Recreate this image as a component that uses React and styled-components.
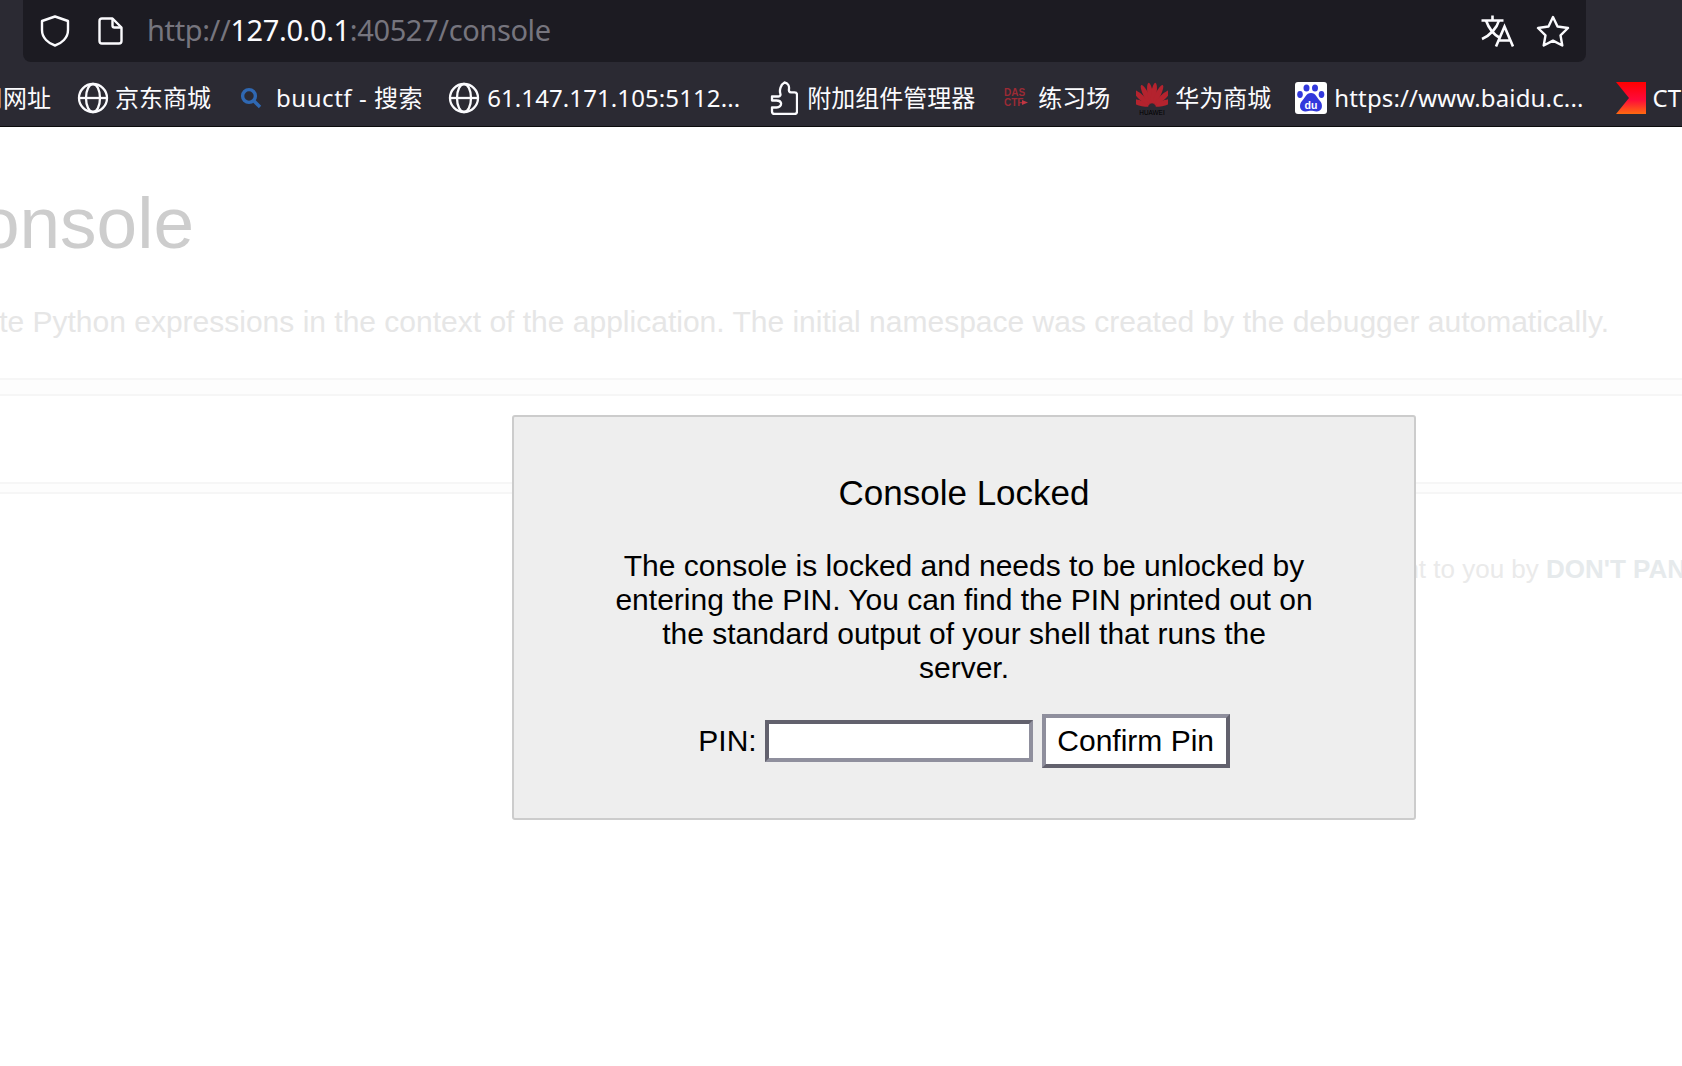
import React from "react";
import styled, { createGlobalStyle } from "styled-components";

const GlobalStyle = createGlobalStyle`
  html, body {
    margin: 0;
    padding: 0;
    width: 100%;
    height: 100%;
    overflow: hidden;
    background: #fff;
  }
  * {
    box-sizing: border-box;
  }
`;

const Browser = styled.div`
  width: 1682px;
  height: 1066px;
  display: flex;
  flex-direction: column;
  overflow: hidden;
`;

const Chrome = styled.header`
  background: #2b2a33;
  font-family: "Noto Sans", "Noto Sans CJK SC", sans-serif;
  color: #fbfbfe;
  border-bottom: 1px solid #0c0c0d;
`;

const UrlRow = styled.div`
  padding-left: 23px;
  padding-right: 96px;
`;

const UrlBar = styled.div`
  height: 62px;
  background: #1c1b22;
  border-radius: 0 0 8px 8px;
  display: flex;
  align-items: center;
  padding: 0 16px 0 17px;
`;

const UrlText = styled.div`
  margin-left: 24px;
  padding-bottom: 3px;
  font-size: 29px;
  letter-spacing: -0.38px;
  color: #76757e;
  flex: 1;
  white-space: nowrap;
`;

const Host = styled.span`
  color: #fbfbfe;
`;

const BarIcon = styled.svg`
  display: block;
  flex: none;
  margin-left: ${(p) => p.$gap || 0}px;
`;

const TranslateIcon = styled(BarIcon)`
  margin-right: 22px;
`;

const BookmarkRow = styled.nav`
  height: 64px;
  padding-top: 8px;
  display: flex;
  align-items: center;
  overflow: hidden;
  white-space: nowrap;
  font-size: 24px;
`;

const Bookmark = styled.div`
  display: flex;
  align-items: center;
  flex: none;
  gap: ${(p) => p.$inner}px;
  margin-left: ${(p) => p.$gap}px;
`;

const Label = styled.span`
  line-height: 32px;
  letter-spacing: ${(p) => p.$spacing || 0}px;
`;

const Page = styled.main`
  position: relative;
  flex: 1;
  background: #fff;
  font-family: "Liberation Sans", Arial, sans-serif;
`;

const ClippedLine = styled.div`
  display: flex;
  justify-content: flex-end;
  overflow: hidden;
  white-space: nowrap;
`;

const Heading = styled(ClippedLine)`
  font-size: 73px;
  line-height: 84px;
  color: #cdcdcd;
  padding-right: 1488px;
  margin-top: 54px;
`;

const Intro = styled(ClippedLine)`
  font-size: 30px;
  line-height: 36px;
  color: #e6e6e6;
  padding-right: 73px;
  margin-top: 39px;
`;

const Rule = styled.div`
  height: ${(p) => p.$height}px;
  margin-top: ${(p) => p.$top}px;
  background: ${(p) => p.$fill};
  border-top: 2px solid #f6f6f6;
  border-bottom: 2px solid #f6f6f6;
`;

const FootNote = styled.div`
  margin-top: 60px;
  margin-left: 1335px;
  font-size: 26px;
  line-height: 30px;
  color: #eaeaea;
  white-space: nowrap;
`;

const FootBold = styled.b`
  color: #e6eaec;
`;

const Prompt = styled.section`
  position: absolute;
  left: 512px;
  top: 288px;
  width: 904px;
  height: 405px;
  padding: 56px 100px 0;
  background: #eee;
  border: 2px solid #ccc;
  border-radius: 3px;
  color: #000;
  text-align: center;
`;

const PromptTitle = styled.div`
  font-size: 35px;
  line-height: 40px;
`;

const PromptText = styled.p`
  margin: 36px 0 0;
  font-size: 30px;
  line-height: 34px;
`;

const PinForm = styled.form`
  display: flex;
  justify-content: center;
  align-items: center;
  margin-top: 29px;
`;

const PinLabel = styled.label`
  font-size: 30px;
  margin-right: 8px;
`;

const PinInput = styled.input`
  width: 268px;
  height: 42px;
  background: #fff;
  border: 4px solid;
  border-color: #62616d #8f8f9d #8f8f9d #62616d;
  margin: 0 9px 0 0;
  padding: 0;
  outline: none;
`;

const PinButton = styled.button`
  width: 188px;
  height: 54px;
  background: #fff;
  border: 4px solid;
  border-color: #8f8f9d #62616d #62616d #8f8f9d;
  font-family: inherit;
  font-size: 30px;
  color: #000;
  padding: 0;
  margin: 0;
`;

const Globe = () => (
  <BarIcon width="32" height="32" viewBox="0 0 32 32" fill="none" stroke="#fbfbfe" strokeWidth="2.3">
    <circle cx="16" cy="16" r="14" />
    <ellipse cx="16" cy="16" rx="7" ry="14" />
    <path d="M2 16h28" />
  </BarIcon>
);

const SearchMark = () => (
  <BarIcon width="22" height="22" viewBox="0 0 22 22" fill="none" stroke="#2f68b3" strokeWidth="3.4">
    <circle cx="9" cy="9" r="6.4" />
    <path d="M13.5 13.5L20 20" />
  </BarIcon>
);

const Puzzle = () => (
  <BarIcon width="28" height="34" viewBox="0 0 28 34" fill="none" stroke="#fbfbfe" strokeWidth="2.3" strokeLinejoin="round">
    <path d="M2 15.5H8.5C10.3 15.5 10.8 14 10.3 12.5C9.3 9.5 10.5 3.5 14.5 1.5C18 2 19.4 5 19 8C18.7 10 19.2 11.3 21 11.3H24.5C26 11.3 27 12.3 27 13.8V30.5C27 32 26 33 24.5 33H4.5C3 33 2 32 2 30.5V26.5H6.5C9.5 26.5 11.5 24.5 11 22C10.5 20 8.5 19.5 6.5 19.5H2V15.5Z" />
  </BarIcon>
);

const DasMark = () => (
  <BarIcon width="24" height="32" viewBox="0 0 24 32" fill="#9c2a35" fontFamily="Liberation Sans, sans-serif" fontSize="10" fontWeight="700">
    <text x="0" y="14">DAS</text>
    <text x="0" y="24">CTF</text>
    <path d="M18 18l6 2.500-6 2.500z" fill="#c23642" />
  </BarIcon>
);

const petals = [-72, -48, -26, -8, 8, 26, 48, 72];

const HuaweiMark = () => (
  <BarIcon width="32" height="34" viewBox="0 0 32 34" fontFamily="Liberation Sans, sans-serif">
    {petals.map((a) => (
      <ellipse key={a} cx="16" cy="12" rx="2.700" ry="10.500" fill="#b4232e" transform={`rotate(${a} 16 26)`} />
    ))}
    <text x="16" y="33.500" fontSize="6.4" fill="#000" textAnchor="middle">HUAWEI</text>
  </BarIcon>
);

const BaiduMark = () => (
  <BarIcon width="32" height="32" viewBox="0 0 32 32">
    <rect width="32" height="32" rx="3" fill="#fff" />
    <g fill="#3238dc">
      <ellipse cx="11.500" cy="6" rx="3" ry="3.600" />
      <ellipse cx="20" cy="6" rx="3" ry="3.600" />
      <ellipse cx="5" cy="12.500" rx="2.800" ry="3.400" />
      <ellipse cx="26.500" cy="12.500" rx="2.800" ry="3.400" />
      <path d="M16 11C11 11 10 16 7 19C4 22 4 29 10 29.500C12.500 29.700 14 28.800 16 28.800C18 28.800 19.500 29.700 22 29.500C28 29 28 22 25 19C22 16 21 11 16 11Z" />
    </g>
    <text x="16" y="27" fill="#fff" fontSize="10.500" fontWeight="700" textAnchor="middle" fontFamily="Liberation Sans, sans-serif">du</text>
  </BarIcon>
);

const CtfMark = () => (
  <BarIcon width="31" height="32" viewBox="0 0 31 32">
    <defs>
      <linearGradient id="ctf" x1="0" y1="0" x2="0" y2="1">
        <stop offset="0" stopColor="#ff0000" />
        <stop offset="0.55" stopColor="#ff0a3a" />
        <stop offset="1" stopColor="#ff6a10" />
      </linearGradient>
    </defs>
    <path d="M1 0H31V32H1L14 16Z" fill="url(#ctf)" />
  </BarIcon>
);

const bookmarks = [
  { icon: <Globe />, text: "京东商城", gap: 26, inner: 6 },
  { icon: <SearchMark />, text: "buuctf - 搜索", gap: 29, inner: 14, spacing: 0.55 },
  { icon: <Globe />, text: "61.147.171.105:5112...", gap: 25, inner: 7, spacing: 0.1 },
  { icon: <Puzzle />, text: "附加组件管理器", gap: 30, inner: 9 },
  { icon: <DasMark />, text: "练习场", gap: 29, inner: 10 },
  { icon: <HuaweiMark />, text: "华为商城", gap: 26, inner: 7 },
  { icon: <BaiduMark />, text: "https://www.baidu.c...", gap: 24, inner: 7, spacing: 0.15 },
  { icon: <CtfMark />, text: "CTF", gap: 31, inner: 7 },
];

const App = () => {
  return (
    <Browser>
      <GlobalStyle />
      <Chrome>
        <UrlRow>
          <UrlBar>
            <BarIcon width="30" height="32" viewBox="0 0 30 32" fill="none" stroke="#fbfbfe" strokeWidth="2.4" strokeLinejoin="round">
              <path d="M15 1.500L28 6V15C28 23 21.500 28.500 15 30.500C8.500 28.500 2 23 2 15V6L15 1.500Z" />
            </BarIcon>
            <BarIcon $gap={28} width="25" height="28" viewBox="0 0 25 28" fill="none" stroke="#fbfbfe" strokeWidth="2.4" strokeLinejoin="round">
              <path d="M4 1.500H14.500L23.500 10.500V24C23.500 25.500 22.500 26.500 21 26.500H4C2.500 26.500 1.500 25.500 1.500 24V4C1.500 2.500 2.500 1.500 4 1.500Z" />
              <path d="M14.500 1.500V8.500C14.500 9.800 15.200 10.500 16.500 10.500H23.500" />
            </BarIcon>
            <UrlText>
              http://<Host>127.0.0.1</Host>:40527/console
            </UrlText>
            <TranslateIcon width="34" height="32" viewBox="0 0 34 32" fill="none" stroke="#fbfbfe" strokeWidth="2.6">
              <path d="M12.500 0.500V5M1.500 5.500H23.500" />
              <path d="M6 5.500C9 14 14.500 20 20 23M19 5.500C17 13 10 20.500 2 24" />
              <path d="M16 31.500L24.500 11.500L33 31.500M19 25.500H30" />
            </TranslateIcon>
            <BarIcon width="34" height="32" viewBox="0 0 34 32" fill="none" stroke="#fbfbfe" strokeWidth="2.4" strokeLinejoin="round">
              <path d="M17 2L21.500 11.500L32 13L24.500 20.300L26.300 30.500L17 25.600L7.700 30.500L9.500 20.300L2 13L12.500 11.500L17 2Z" />
            </BarIcon>
          </UrlBar>
        </UrlRow>
        <BookmarkRow>
          <Bookmark $gap={-45} $inner={0}>
            <Label>常用网址</Label>
          </Bookmark>
          {bookmarks.map((b) => (
            <Bookmark key={b.text} $gap={b.gap} $inner={b.inner}>
              {b.icon}
              <Label $spacing={b.spacing}>{b.text}</Label>
            </Bookmark>
          ))}
        </BookmarkRow>
      </Chrome>
      <Page>
        <Heading>
          <span>Interactive Console</span>
        </Heading>
        <Intro>
          <span>
            In this console you can execute Python expressions in the context of the application. The initial namespace was created by the debugger automatically.
          </span>
        </Intro>
        <Rule $top={38} $height={18} $fill="#fdfdfd" />
        <Rule $top={86} $height={12} $fill="#fdfdfd" />
        <FootNote>
          Brought to you by <FootBold>DON'T PANIC</FootBold>, your friendly Werkzeug powered traceback interpreter.
        </FootNote>
        <Prompt>
          <PromptTitle>Console Locked</PromptTitle>
          <PromptText>
            The console is locked and needs to be unlocked by entering the PIN. You can find the PIN printed out on the standard output of your shell that runs the server.
          </PromptText>
          <PinForm>
            <PinLabel>PIN:</PinLabel>
            <PinInput type="text" />
            <PinButton type="button">Confirm Pin</PinButton>
          </PinForm>
        </Prompt>
      </Page>
    </Browser>
  );
};

export default App;
